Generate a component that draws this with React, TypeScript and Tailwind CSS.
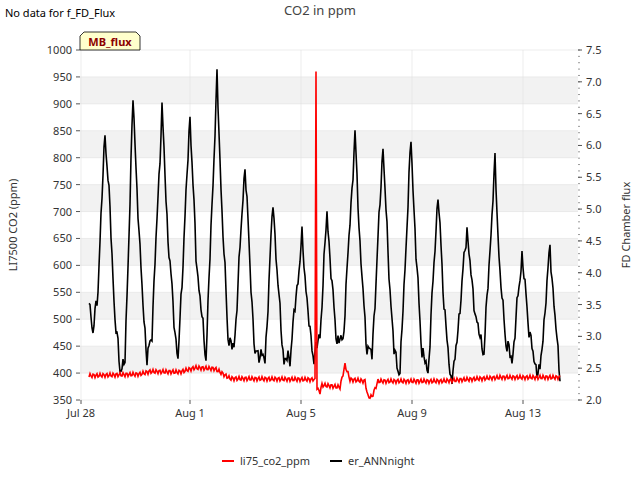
import React from "react";

const X0 = 80, X1 = 578, Y0 = 50, Y1 = 400;
const yL = (v: number) => Y1 - ((v - 350) / 650) * (Y1 - Y0);
const yR = (v: number) => Y1 - ((v - 2) / 5.5) * (Y1 - Y0);

const blackKeys: [number, number][] = [[89,545],[93,470],[98,560],[105,850],[110,700],[115,500],[120,410],[125,420],[133,910],[140,620],[147,420],[152,480],[162,890],[168,650],[175,480],[178,420],[190,880],[196,620],[202,500],[206,430],[217,945],[222,700],[228,470],[234,440],[245,790],[250,600],[255,430],[260,440],[265,420],[273,720],[278,560],[284,420],[290,430],[302,650],[306,560],[310,470],[314,430],[320,470],[327,700],[332,560],[337,460],[343,460],[355,840],[360,640],[366,460],[372,430],[383,825],[388,620],[394,440],[400,400],[411,835],[416,620],[422,440],[428,400],[438,735],[443,560],[450,390],[455,420],[467,670],[472,560],[478,480],[484,440],[495,790],[500,580],[506,460],[512,420],[522,620],[528,500],[534,420],[540,400],[550,635],[555,500],[560,400]];
const redKeys: [number, number][] = [[89,395],[140,398],[150,403],[180,402],[195,410],[215,408],[230,390],[312,388],[315,390],[316,960],[317,370],[320,365],[322,378],[340,374],[345,415],[350,388],[365,385],[368,356],[372,356],[378,385],[440,385],[500,392],[560,392]];

function interp(keys: [number, number][], x: number) {
  for (let i = 0; i < keys.length - 1; i++) {
    const [xa, va] = keys[i], [xb, vb] = keys[i + 1];
    if (x >= xa && x <= xb) return xb === xa ? vb : va + ((x - xa) / (xb - xa)) * (vb - va);
  }
  return keys[keys.length - 1][1];
}

function build(keys: [number, number][], amp: number, step: number) {
  const pts: string[] = [];
  for (let x = keys[0][0]; x <= keys[keys.length - 1][0]; x += step) {
    const v = interp(keys, x) + amp * (Math.sin(x * 2.7) * Math.cos(x * 1.3) + 0.6 * Math.sin(x * 7.1));
    pts.push(`${x.toFixed(1)},${yL(v).toFixed(1)}`);
  }
  return "M" + pts.join(" L");
}

export default function App() {
  const left = [];
  for (let v = 350; v <= 1000; v += 50) left.push(v);
  const right = [2, 2.5, 3, 3.5, 4, 4.5, 5, 5.5, 6, 6.5, 7, 7.5];
  const bands = [900, 800, 700, 600, 500, 400];
  const xt: [number, string][] = [[81, "Jul 28"], [190, "Aug 1"], [301, "Aug 5"], [412, "Aug 9"], [523, "Aug 13"]];
  const redPath = (() => {
    const pts: string[] = [];
    for (let x = 89; x <= 560; x += 1) {
      let v = interp(redKeys, x);
      if (!(x >= 315 && x <= 317)) v += 4 * Math.sin(x * 1.9);
      pts.push(`${x},${yL(v).toFixed(1)}`);
    }
    pts.splice(227, 0, `316,${yL(960)}`);
    return "M" + pts.join(" L");
  })();
  return (
    <div className="w-[640px] h-[480px] bg-white font-['DejaVu_Sans',sans-serif]">
      <svg width="640" height="480">
        <text x="5" y="17" fontSize="11" fill="#000">No data for f_FD_Flux</text>
        <text x="320" y="15" fontSize="13" fill="#444" textAnchor="middle">CO2 in ppm</text>
        <rect x={X0} y={Y0} width={X1 - X0} height={Y1 - Y0} fill="#fff" />
        {bands.map(b => (
          <rect key={b} x={X0} y={yL(b + 50)} width={X1 - X0} height={yL(b) - yL(b + 50)} fill="#f2f2f2" />
        ))}
        {left.map(v => <line key={v} x1={X0} x2={X1} y1={yL(v)} y2={yL(v)} stroke="#e0e0e0" strokeWidth="0.6" />)}
        {xt.map(([x]) => <line key={x} x1={x} x2={x} y1={Y0} y2={Y1} stroke="#e0e0e0" strokeWidth="0.6" />)}
        <path d={build(blackKeys, 14, 1)} fill="none" stroke="#000" strokeWidth="1.6" />
        <path d={redPath} fill="none" stroke="#f00" strokeWidth="1.6" />
        {left.map(v => (
          <g key={v}>
            <line x1={X0 - 4} x2={X0} y1={yL(v)} y2={yL(v)} stroke="#555" />
            <text x={X0 - 8} y={yL(v) + 4} fontSize="11" fill="#333" textAnchor="end">{v}</text>
          </g>
        ))}
        {right.map(v => (
          <g key={v}>
            <line x1={X1} x2={X1 + 4} y1={yR(v)} y2={yR(v)} stroke="#555" />
            <text x={X1 + 8} y={yR(v) + 4} fontSize="11" fill="#333">{v.toFixed(1)}</text>
          </g>
        ))}
        {Array.from({ length: 56 }, (_, i) => 2 + i * 0.1).map((v, i) => (
          <line key={i} x1={X1} x2={X1 + 2} y1={yR(v)} y2={yR(v)} stroke="#555" strokeWidth="0.6" />
        ))}
        {xt.map(([x, l]) => (
          <g key={l}>
            <line x1={x} x2={x} y1={Y1} y2={Y1 + 4} stroke="#555" />
            <text x={x} y={Y1 + 17} fontSize="11" fill="#333" textAnchor="middle">{l}</text>
          </g>
        ))}
        <text transform="translate(17,225) rotate(-90)" fontSize="11" fill="#333" textAnchor="middle">LI7500 CO2 (ppm)</text>
        <text transform="translate(630,225) rotate(-90)" fontSize="11" fill="#333" textAnchor="middle">FD Chamber flux</text>
        <path d="M80,50 L80,36 L84,32 L136,32 L140,36 L140,50 Z" fill="#ffffcc" stroke="#000" strokeWidth="0.8" />
        <text x="110" y="46" fontSize="11" fontWeight="bold" fill="#8b0000" textAnchor="middle">MB_flux</text>
        <line x1="222" x2="234" y1="461" y2="461" stroke="#f00" strokeWidth="2" />
        <text x="240" y="465" fontSize="11" fill="#333">li75_co2_ppm</text>
        <line x1="330" x2="342" y1="461" y2="461" stroke="#000" strokeWidth="2" />
        <text x="348" y="465" fontSize="11" fill="#333">er_ANNnight</text>
      </svg>
    </div>
  );
}
